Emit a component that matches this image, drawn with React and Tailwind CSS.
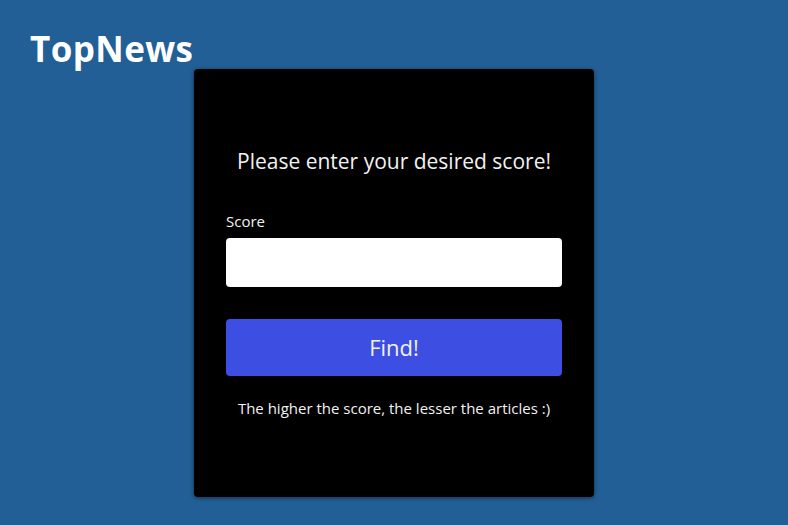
export default function App() {
  return (
    <div className="min-h-screen w-full bg-[#225f96] text-[#f2f2f2]" style={{ fontFamily: '"Open Sans", "Noto Sans", sans-serif' }}>
      <header className="pl-[30px] pt-[28px] h-[69px]">
        <h1 className="text-[35px] leading-[42px] font-bold text-white tracking-[0.4px]">TopNews</h1>
      </header>
      <div className="mx-auto w-[400px] h-[428px] bg-black rounded-[4px] shadow-[0_1px_4px_rgba(0,0,0,0.5)] px-[32px] pt-[78px]">
        <h2 className="text-center text-[21px] leading-[28px]">Please enter your desired score!</h2>
        <label className="block mt-[36px] text-[15px] leading-[20px]">Score</label>
        <input type="text" className="mt-[7px] block w-full h-[49px] rounded-[4px] bg-white text-black px-3 outline-none" />
        <button className="mt-[32px] w-full h-[57px] rounded-[4px] bg-[#3d4ee3] text-[22px] text-[#f2f2f2]">Find!</button>
        <p className="mt-[22px] text-center text-[15px] leading-[20px]">The higher the score, the lesser the articles :)</p>
      </div>
    </div>
  );
}
